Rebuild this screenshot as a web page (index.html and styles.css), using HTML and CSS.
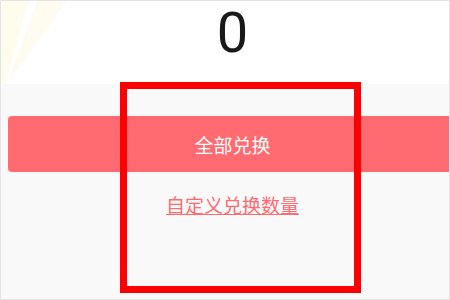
FILE: index.html
```html
<!DOCTYPE html>
<html>
  <head>
    <title>兑换</title>
    <link rel="stylesheet" href="styles.css">
  </head>
  <body>
    <div class="frame">
      <div class="screen">
        <div class="header">
          <svg class="rays" width="80" height="83" viewBox="0 0 80 83">
            <polygon points="0,0 28,0 4,83 0,83" fill="#fefcef"></polygon>
            <polygon points="36,0 66,0 6,83" fill="#fefcf0"></polygon>
          </svg>
          <p class="points">0</p>
        </div>

        <div class="body">
          <button class="exchange-all-button">全部兑换</button>
          <a class="custom-link" href="#">自定义兑换数量</a>
        </div>
      </div>

      <div class="highlight-box"></div>
    </div>
  </body>
</html>
```

FILE: styles.css
```css
body {
  margin: 0;
  overflow: hidden;
  font-family: Roboto, "Noto Sans CJK SC", sans-serif;
}

.frame {
  position: relative;
  width: 448px;
  height: 298px;
  border: solid 1px rgb(228, 228, 228);
  overflow: hidden;
}

.screen {
  width: 463px;
  height: 100%;
  background-color: rgb(249, 249, 249);
}

.header {
  position: relative;
  height: 83px;
  background-color: white;
  text-align: center;
}

.rays {
  position: absolute;
  left: 0;
  top: 0;
}

.points {
  position: relative;
  margin: 0;
  padding-top: 4px;
  font-size: 56px;
  line-height: 1;
  color: rgb(25, 25, 25);
}

.body {
  display: flex;
  flex-direction: column;
  align-items: center;
  padding: 32px 7px 0 7px;
}

.exchange-all-button {
  width: 100%;
  height: 56px;
  border: none;
  border-radius: 4px;
  background-color: rgb(255, 107, 112);
  color: white;
  font-family: "Noto Sans CJK SC", sans-serif;
  font-size: 19px;
}

.custom-link {
  margin-top: 21px;
  color: rgb(255, 107, 112);
  font-family: "Noto Sans CJK SC", sans-serif;
  font-size: 19px;
  line-height: 24px;
  text-decoration: underline;
}

.highlight-box {
  position: absolute;
  left: 119px;
  top: 81px;
  width: 227px;
  height: 197px;
  border: solid 7px rgb(255, 0, 0);
}
```
